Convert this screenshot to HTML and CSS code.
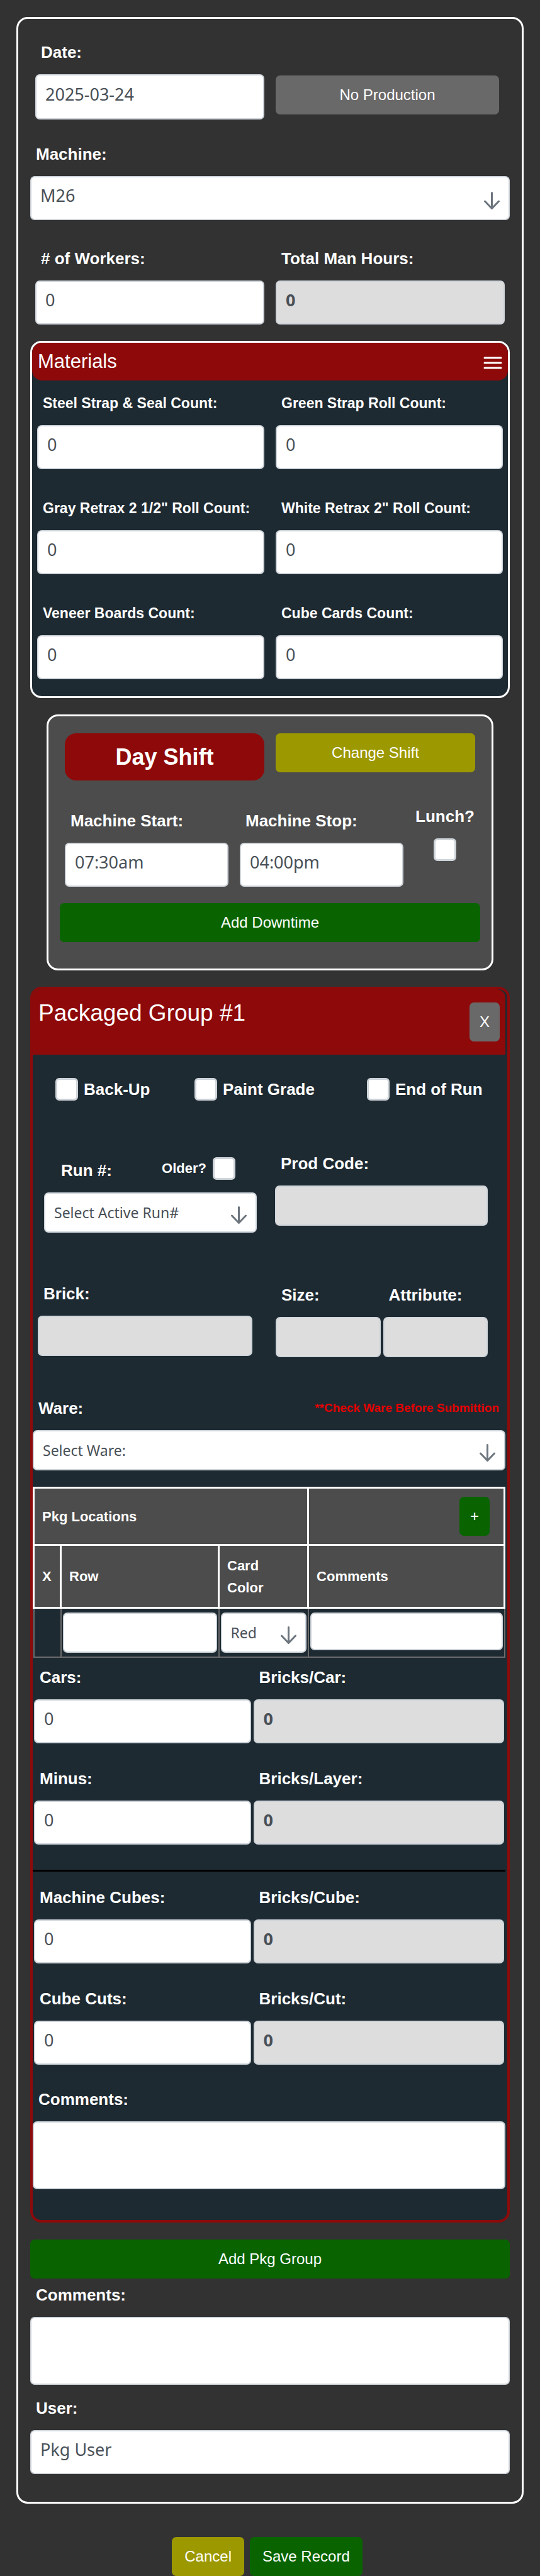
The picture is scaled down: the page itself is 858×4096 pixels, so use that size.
FILE: index.html
```html
<!DOCTYPE html>
<html lang="en">
<head>
<meta charset="utf-8">
<meta name="viewport" content="width=device-width, initial-scale=1">
<title>Packaging Record</title>
<link rel="stylesheet" href="styles.css">
</head>
<body>
<form class="page">
  <div class="card">
    <div class="row date-row">
      <div class="field">
        <label class="label" for="date">Date:</label>
        <input class="control date" id="date" type="text" value="2025-03-24">
      </div>
      <button class="btn gray no-production" type="button">No Production</button>
    </div>

    <div class="field machine">
      <label class="label" for="machine">Machine:</label>
      <div class="select-box">
        <select class="control" id="machine"><option>M26</option></select>
        <svg class="arrow" viewBox="0 0 25 28"><path d="M12.500 1.500V26M1.500 15L12.500 26.500L23.500 15"/></svg>
      </div>
    </div>

    <div class="row workers">
      <div class="field">
        <label class="label" for="workers"># of Workers:</label>
        <input class="control" id="workers" type="text" value="0">
      </div>
      <div class="field">
        <label class="label" for="hours">Total Man Hours:</label>
        <input class="control" id="hours" type="text" value="0" readonly>
      </div>
    </div>

    <section class="materials">
      <header class="materials-head">
        <h2 class="materials-title">Materials</h2>
        <button class="menu" type="button" aria-label="Toggle materials"><svg class="menu-icon" viewBox="0 0 30 20"><path d="M2 2H28M2 10H28M2 18H28"/></svg></button>
      </header>
      <div class="materials-grid">
        <div class="field"><label class="label small" for="m1">Steel Strap &amp; Seal Count:</label><input class="control" id="m1" type="text" value="0"></div>
        <div class="field"><label class="label small" for="m2">Green Strap Roll Count:</label><input class="control" id="m2" type="text" value="0"></div>
        <div class="field"><label class="label small" for="m3">Gray Retrax 2 1/2" Roll Count:</label><input class="control" id="m3" type="text" value="0"></div>
        <div class="field"><label class="label small" for="m4">White Retrax 2" Roll Count:</label><input class="control" id="m4" type="text" value="0"></div>
        <div class="field"><label class="label small" for="m5">Veneer Boards Count:</label><input class="control" id="m5" type="text" value="0"></div>
        <div class="field"><label class="label small" for="m6">Cube Cards Count:</label><input class="control" id="m6" type="text" value="0"></div>
      </div>
    </section>

    <section class="shift">
      <div class="shift-top">
        <h2 class="shift-name">Day Shift</h2>
        <button class="btn olive" type="button">Change Shift</button>
      </div>
      <div class="shift-times">
        <div class="field"><label class="label" for="start">Machine Start:</label><input class="control" id="start" type="text" value="07:30am"></div>
        <div class="field"><label class="label" for="stop">Machine Stop:</label><input class="control" id="stop" type="text" value="04:00pm"></div>
        <div class="lunch"><label class="label" for="lunch">Lunch?</label><input class="check" id="lunch" type="checkbox"></div>
      </div>
      <button class="btn green downtime" type="button">Add Downtime</button>
    </section>

    <section class="group">
      <header class="group-head">
        <h2 class="group-title">Packaged Group #1</h2>
        <button class="btn gray square" type="button" aria-label="Remove group">X</button>
      </header>

      <div class="checks">
        <label class="check-label"><input class="check" type="checkbox">Back-Up</label>
        <label class="check-label"><input class="check" type="checkbox">Paint Grade</label>
        <label class="check-label"><input class="check" type="checkbox">End of Run</label>
      </div>

      <div class="run-row">
        <div class="run">
          <div class="run-head">
            <label class="label" for="run">Run #:</label>
            <label class="older">Older? <input class="check" type="checkbox"></label>
          </div>
          <div class="select-box">
            <select class="control compact" id="run"><option>Select Active Run#</option></select>
            <svg class="arrow" viewBox="0 0 25 28"><path d="M12.500 1.500V26M1.500 15L12.500 26.500L23.500 15"/></svg>
          </div>
        </div>
        <div class="field"><label class="label" for="prod">Prod Code:</label><input class="control compact" id="prod" type="text" readonly></div>
      </div>

      <div class="brick-row">
        <div class="field"><label class="label" for="brick">Brick:</label><input class="control compact" id="brick" type="text" readonly></div>
        <div class="size-row">
          <div class="field"><label class="label" for="size">Size:</label><input class="control compact" id="size" type="text" readonly></div>
          <div class="field"><label class="label" for="attr">Attribute:</label><input class="control compact" id="attr" type="text" readonly></div>
        </div>
      </div>

      <div class="ware">
        <div class="ware-head">
          <label class="label" for="ware">Ware:</label>
          <strong class="warning">**Check Ware Before Submittion</strong>
        </div>
        <div class="select-box">
          <select class="control compact" id="ware"><option>Select Ware:</option></select>
          <svg class="arrow" viewBox="0 0 25 28"><path d="M12.500 1.500V26M1.500 15L12.500 26.500L23.500 15"/></svg>
        </div>
      </div>

      <table class="locations">
        <colgroup><col class="col-x"><col class="col-row"><col class="col-color"><col></colgroup>
        <thead>
          <tr class="locations-title"><th colspan="3">Pkg Locations</th><th class="add-cell"><button class="btn green square" type="button" aria-label="Add location">+</button></th></tr>
          <tr class="locations-head"><th>X</th><th>Row</th><th>Card<br>Color</th><th>Comments</th></tr>
        </thead>
        <tbody>
          <tr>
            <td></td>
            <td><input class="control compact" type="text" aria-label="Row"></td>
            <td>
              <div class="select-box">
                <select class="control compact" aria-label="Card color"><option>Red</option></select>
                <svg class="arrow" viewBox="0 0 25 28"><path d="M12.500 1.500V26M1.500 15L12.500 26.500L23.500 15"/></svg>
              </div>
            </td>
            <td><input class="control compact note" type="text" aria-label="Comments"></td>
          </tr>
        </tbody>
      </table>

      <div class="counts cars">
        <div class="field"><label class="label" for="cars">Cars:</label><input class="control" id="cars" type="text" value="0"></div>
        <div class="field"><label class="label" for="bcar">Bricks/Car:</label><input class="control" id="bcar" type="text" value="0" readonly></div>
        <div class="field"><label class="label" for="minus">Minus:</label><input class="control" id="minus" type="text" value="0"></div>
        <div class="field"><label class="label" for="blayer">Bricks/Layer:</label><input class="control" id="blayer" type="text" value="0" readonly></div>
      </div>
      <hr class="divider">
      <div class="counts cubes">
        <div class="field"><label class="label" for="cubes">Machine Cubes:</label><input class="control" id="cubes" type="text" value="0"></div>
        <div class="field"><label class="label" for="bcube">Bricks/Cube:</label><input class="control" id="bcube" type="text" value="0" readonly></div>
        <div class="field"><label class="label" for="cuts">Cube Cuts:</label><input class="control" id="cuts" type="text" value="0"></div>
        <div class="field"><label class="label" for="bcut">Bricks/Cut:</label><input class="control" id="bcut" type="text" value="0" readonly></div>
      </div>

      <div class="field group-comments">
        <label class="label" for="gcomments">Comments:</label>
        <textarea class="control area" id="gcomments"></textarea>
      </div>
    </section>

    <button class="btn green add-group" type="button">Add Pkg Group</button>

    <div class="field comments">
      <label class="label" for="comments">Comments:</label>
      <textarea class="control area" id="comments"></textarea>
    </div>
    <div class="field user">
      <label class="label" for="user">User:</label>
      <input class="control" id="user" type="text" value="Pkg User">
    </div>
  </div>

  <div class="actions">
    <button class="btn olive" type="button">Cancel</button>
    <button class="btn green" type="submit">Save Record</button>
  </div>
</form>
</body>
</html>
```
FILE: styles.css
```css
* {
  box-sizing: border-box;
}

body {
  margin: 0;
  background: #323232;
  color: #fff;
  font-family: "Liberation Sans", Arial, sans-serif;
}

.page {
  padding: 27px 26px 0;
}

.card {
  border: 3px solid #fff;
  border-radius: 18px;
  padding: 32px 19px 44px;
}

/* Fields */
.field {
  display: flex;
  flex-direction: column;
  min-width: 0;
}

.label {
  display: block;
  padding-left: 9px;
  margin-bottom: 14px;
  font-size: 26px;
  font-weight: bold;
  line-height: 42px;
  white-space: nowrap;
}

.label.small {
  font-size: 23px;
}

.control {
  display: block;
  width: 100%;
  height: 70px;
  margin: 0;
  padding: 0 14px 10px;
  border: 2px solid #ced4da;
  border-radius: 7px;
  background: #fff;
  color: #495057;
  font-family: "Noto Sans", "Open Sans", sans-serif;
  font-size: 27px;
  appearance: none;
}

.control:read-only:not(select) {
  background: #ddd;
  font-weight: bold;
}

.control.date {
  height: 72px;
}

.control.compact {
  height: 64px;
  padding-bottom: 0;
  font-size: 23px;
}

.control.area {
  height: 108px;
  resize: none;
}

.select-box {
  display: grid;
  align-items: center;
}

.select-box > * {
  grid-area: 1 / 1;
}

.arrow {
  justify-self: end;
  width: 25px;
  height: 28px;
  margin: 8px 16px 0 0;
  fill: none;
  stroke: #6c757d;
  stroke-width: 3;
  stroke-linecap: round;
  stroke-linejoin: round;
  pointer-events: none;
}

.check {
  flex: none;
  width: 36px;
  height: 36px;
  margin: 0;
  border: 3px solid #ced4da;
  border-radius: 6px;
  background: #fff;
  appearance: none;
}

/* Buttons */
.btn {
  height: 62px;
  padding: 0 20px;
  border: 0;
  border-radius: 7px;
  color: #fff;
  font-family: inherit;
  font-size: 24px;
  white-space: nowrap;
}

.gray {
  background: #696969;
}

.olive {
  background: #9c9800;
}

.green {
  background: #096400;
}

.square {
  width: 48px;
  padding: 0;
}

/* Top rows */
.row {
  display: grid;
  grid-template-columns: 1fr 1fr;
  gap: 18px;
  padding: 0 8px;
}

.no-production {
  margin: 58px 9px 0 0;
}

.machine {
  margin-top: 34px;
}

.workers {
  margin-top: 40px;
}

/* Materials */
.materials {
  margin-top: 26px;
  border: 3px solid #fff;
  border-radius: 18px;
  background: #1e2a32;
  padding-bottom: 27px;
}

.materials-head {
  display: flex;
  align-items: center;
  justify-content: space-between;
  padding: 0 9px;
  border-radius: 16px;
  background: #8e0a0a;
}

.materials-title {
  margin: 0;
  font-size: 31px;
  font-weight: normal;
  line-height: 60px;
}

.menu {
  padding: 0;
  border: 0;
  background: none;
  line-height: 0;
}

.menu-icon {
  width: 30px;
  height: 20px;
  margin-top: 4px;
  fill: none;
  stroke: #fff;
  stroke-width: 3;
  stroke-linecap: round;
}

.materials-grid {
  display: grid;
  grid-template-columns: 1fr 1fr;
  gap: 41px 18px;
  padding: 15px 8px 0;
}

/* Shift */
.shift {
  display: flex;
  flex-direction: column;
  margin: 26px 26px 0;
  padding: 27px 26px 42px;
  border: 3px solid #fff;
  border-radius: 18px;
  background: #4c4c4c;
}

.shift-top {
  display: grid;
  grid-template-columns: 1fr 1fr;
  align-items: start;
  gap: 18px;
}

.shift-name {
  margin: 0;
  border-radius: 18px;
  background: #8e0a0a;
  font-size: 36px;
  line-height: 75px;
  text-align: center;
}

.shift-times {
  display: grid;
  grid-template-columns: 1fr 1fr 96px;
  gap: 18px;
  margin-top: 43px;
}

.lunch {
  display: flex;
  flex-direction: column;
  align-items: center;
  margin-top: -7px;
}

.lunch .label {
  padding-left: 0;
}

.downtime {
  margin: 26px -8px 0;
}

/* Packaged group */
.group {
  margin-top: 26px;
  padding: 0 3px 49px 0;
  border: 4px solid #8c0a0a;
  border-radius: 18px;
  background: #1e2a32;
}

.group-head {
  display: flex;
  align-items: flex-start;
  justify-content: space-between;
  padding: 0 9px 21px;
  border-radius: 14px 14px 0 0;
  background: #8e0a0a;
}

.group-title {
  margin: 11px 0 0;
  font-size: 37px;
  font-weight: normal;
  line-height: 54px;
}

.group-head .btn {
  margin-top: 21px;
}

.checks {
  display: grid;
  grid-template-columns: 221fr 274fr 184fr;
  padding: 37px 36px 0;
}

.check-label {
  display: flex;
  align-items: center;
  gap: 9px;
  font-size: 26px;
  font-weight: bold;
  line-height: 36px;
  white-space: nowrap;
}

.run-row {
  display: grid;
  grid-template-columns: 1fr 1fr;
  gap: 29px;
  padding: 79px 28px 0 18px;
}

.run-head {
  display: flex;
  align-items: flex-start;
  justify-content: space-between;
  padding: 11px 34px 0 18px;
}

.older {
  display: flex;
  gap: 10px;
  font-size: 22px;
  font-weight: bold;
  line-height: 36px;
}

.brick-row {
  display: grid;
  grid-template-columns: 341fr 337fr;
  gap: 37px;
  padding: 76px 28px 0 8px;
}

.size-row {
  display: grid;
  grid-template-columns: 1fr 1fr;
  gap: 4px;
  padding-top: 2px;
}

.ware {
  padding-top: 60px;
}

.ware-head {
  display: flex;
  justify-content: space-between;
  padding-right: 10px;
}

.warning {
  color: #e60000;
  font-size: 19px;
  line-height: 42px;
}

.locations {
  width: 100%;
  margin-top: 26px;
  border-collapse: collapse;
  table-layout: fixed;
}

.col-x {
  width: 43px;
}

.col-row {
  width: 251px;
}

.col-color {
  width: 19%;
}

.locations th {
  padding: 0 12px;
  border: 3px solid #fff;
  background: #4c4c4c;
  font-size: 22px;
  line-height: 35px;
  text-align: left;
}

.locations th.add-cell {
  padding-right: 22px;
  text-align: right;
}

.locations-title {
  height: 91px;
}

.locations-head {
  height: 100px;
}

.locations td {
  padding: 6px 2px;
  border: 2px solid #6b6b6b;
  vertical-align: top;
}

.locations .note {
  height: 60px;
}

.counts {
  display: grid;
  grid-template-columns: 345fr 399fr;
  gap: 35px 4px;
  padding: 0 2px;
}

.cars {
  padding-top: 10px;
}

.divider {
  height: 3px;
  margin: 40px 0 0;
  border: 0;
  background: #000;
}

.cubes {
  padding-top: 20px;
}

.group-comments {
  margin-top: 34px;
}

/* Bottom */
.add-group {
  display: block;
  width: 100%;
  margin-top: 27px;
}

.comments {
  margin-top: 5px;
}

.user {
  margin-top: 16px;
}

.actions {
  display: flex;
  justify-content: center;
  gap: 9px;
  padding: 53px 9px 0 0;
}
```
